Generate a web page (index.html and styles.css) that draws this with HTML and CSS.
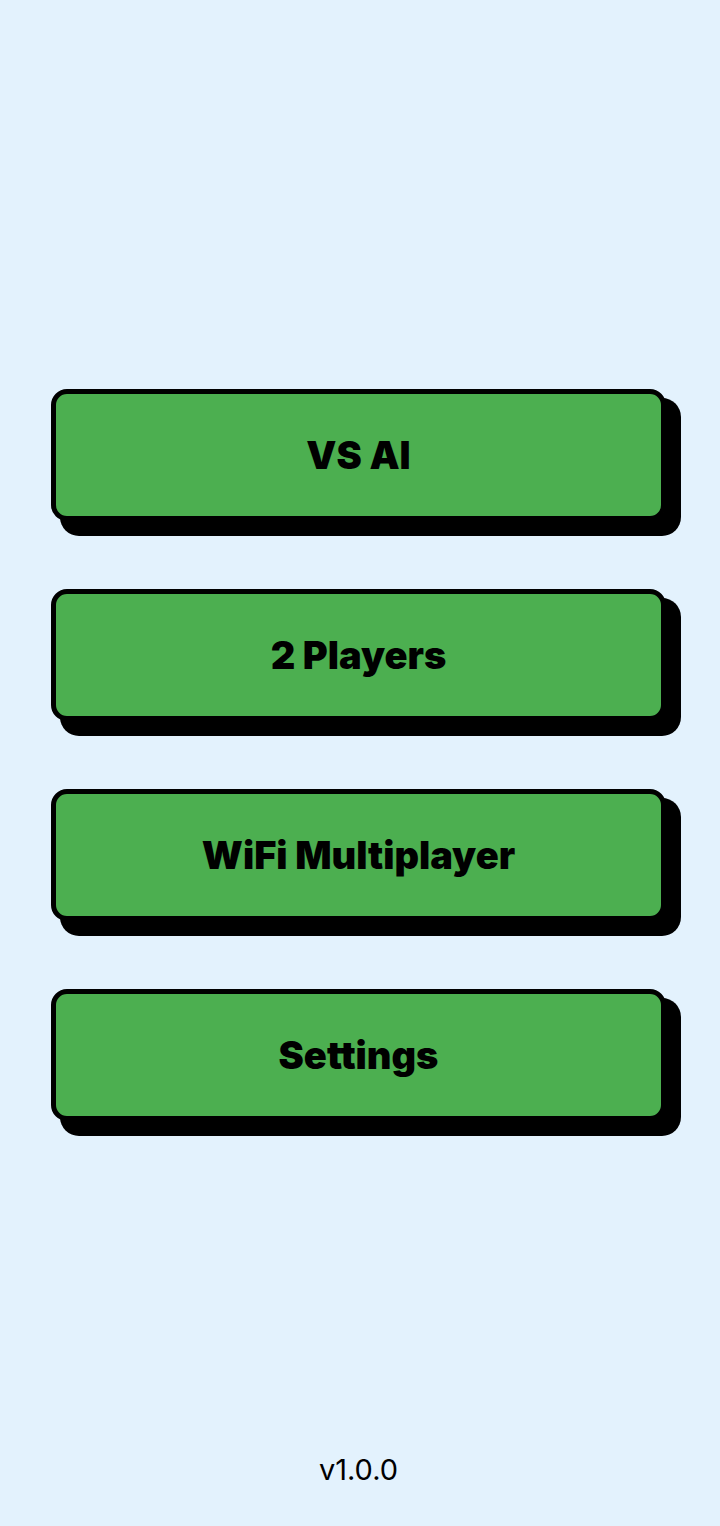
FILE: index.html
```html
<!DOCTYPE html>
<html lang="en">
<head>
<meta charset="utf-8">
<title>Menu</title>
<link rel="stylesheet" href="styles.css">
</head>
<body>
<main class="screen">
  <nav class="menu">
    <button class="menu-btn">VS AI</button>
    <button class="menu-btn">2 Players</button>
    <button class="menu-btn">WiFi Multiplayer</button>
    <button class="menu-btn">Settings</button>
  </nav>
  <footer class="version">v1.0.0</footer>
</main>
</body>
</html>
```
FILE: styles.css
```css
html, body {
  margin: 0;
  padding: 0;
}
body {
  background: #e3f2fd;
  font-family: Inter, "Noto Sans", sans-serif;
}
.screen {
  height: 1526px;
  display: flex;
  flex-direction: column;
  box-sizing: border-box;
  padding: 389px 54px 0 51px;
}
.menu {
  display: flex;
  flex-direction: column;
  gap: 68px;
}
.menu-btn {
  height: 132px;
  box-sizing: border-box;
  background: #4caf50;
  border: 5px solid #000;
  border-radius: 16px;
  box-shadow: 12px 12px 0 3px #000;
  font-family: Inter, "Noto Sans", sans-serif;
  font-weight: 900;
  font-size: 38px;
  letter-spacing: 0;
  color: #000;
  padding: 0;
  cursor: pointer;
}
.version {
  margin-top: auto;
  margin-bottom: 39px;
  text-align: center;
  font-size: 29px;
  font-weight: 400;
  color: #000;
}
```
